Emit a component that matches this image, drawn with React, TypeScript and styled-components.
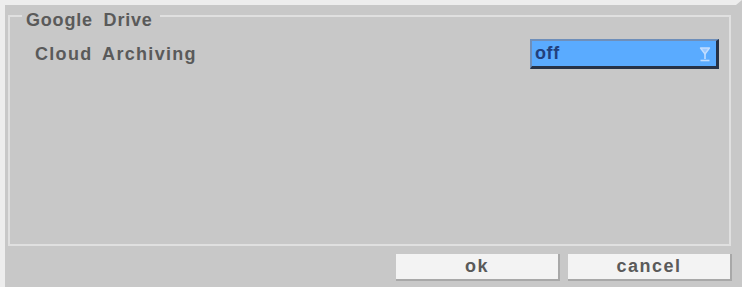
import React from "react";
import styled, { createGlobalStyle } from "styled-components";

const Global = createGlobalStyle`
  html, body { margin: 0; padding: 0; background: #c8c8c8; }
  #root { width: 742px; height: 287px; }
`;

const Window = styled.div`
  box-sizing: border-box;
  width: 742px;
  height: 287px;
  background: #c8c8c8;
  border-top: 5px solid #ededed;
  border-left: 5px solid #ededed;
  border-right: 6px solid #c8c8c8;
  display: flex;
  flex-direction: column;
  font-family: "Liberation Sans", Arial, sans-serif;
  font-weight: bold;
  color: #5a5a5a;
  overflow: hidden;
`;

const Panel = styled.fieldset`
  box-sizing: border-box;
  margin: -3px 0 0 3px;
  height: 244px;
  width: 723px;
  border: 2px solid #e0e0e0;
  padding: 0 10px 0 12px;
  display: flex;
  flex-direction: column;
`;

const Legend = styled.legend`
  padding: 8px 7px 0 4px;
  font-size: 18px;
  line-height: 20px;
  letter-spacing: 0.8px;
  word-spacing: 5px;
  color: #5a5a5a;
`;

const Row = styled.div`
  display: flex;
  align-items: center;
  justify-content: space-between;
  margin-top: 9px;
  height: 30px;
`;

const Label = styled.span`
  margin-left: 13px;
  font-size: 18px;
  letter-spacing: 1.3px;
  word-spacing: 4px;
  color: #5a5a5a;
`;

const Select = styled.div`
  box-sizing: border-box;
  width: 189px;
  height: 30px;
  background: #5aabff;
  border-top: 2px solid #6f8fba;
  border-left: 2px solid #6f8fba;
  border-right: 3px solid #263247;
  border-bottom: 3px solid #263247;
  display: flex;
  align-items: center;
  justify-content: space-between;
  padding: 0 5px 0 3px;
`;

const SelectValue = styled.span`
  font-size: 18px;
  color: #22407c;
  letter-spacing: 0.6px;
`;

const Footer = styled.div`
  display: flex;
  justify-content: flex-end;
  gap: 8px;
  padding-top: 8px;
  margin-right: 4px;
`;

const Button = styled.div`
  box-sizing: border-box;
  width: 164px;
  height: 27px;
  background: #f3f3f3;
  border-right: 2px solid #a8a8a8;
  border-bottom: 2px solid #a8a8a8;
  display: flex;
  align-items: center;
  justify-content: center;
  font-size: 18px;
  letter-spacing: 1.5px;
  color: #5a5a5a;
`;

const Arrow = () => (
  <svg width="12" height="16" viewBox="0 0 12 16">
    <path d="M1.5 2 H10.5 L6 8 Z" fill="#9cc9ff" stroke="#c2ddff" strokeWidth="1.4" strokeLinejoin="round" />
    <path d="M6 8 V13" fill="none" stroke="#c2ddff" strokeWidth="1.6" />
    <path d="M1.5 14.5 H10.5" fill="none" stroke="#c2ddff" strokeWidth="1.6" />
  </svg>
);

export default function App() {
  return (
    <>
      <Global />
      <Window>
        <Panel>
          <Legend>Google Drive</Legend>
          <Row>
            <Label>Cloud Archiving</Label>
            <Select>
              <SelectValue>off</SelectValue>
              <Arrow />
            </Select>
          </Row>
        </Panel>
        <Footer>
          <Button>ok</Button>
          <Button>cancel</Button>
        </Footer>
      </Window>
    </>
  );
}
